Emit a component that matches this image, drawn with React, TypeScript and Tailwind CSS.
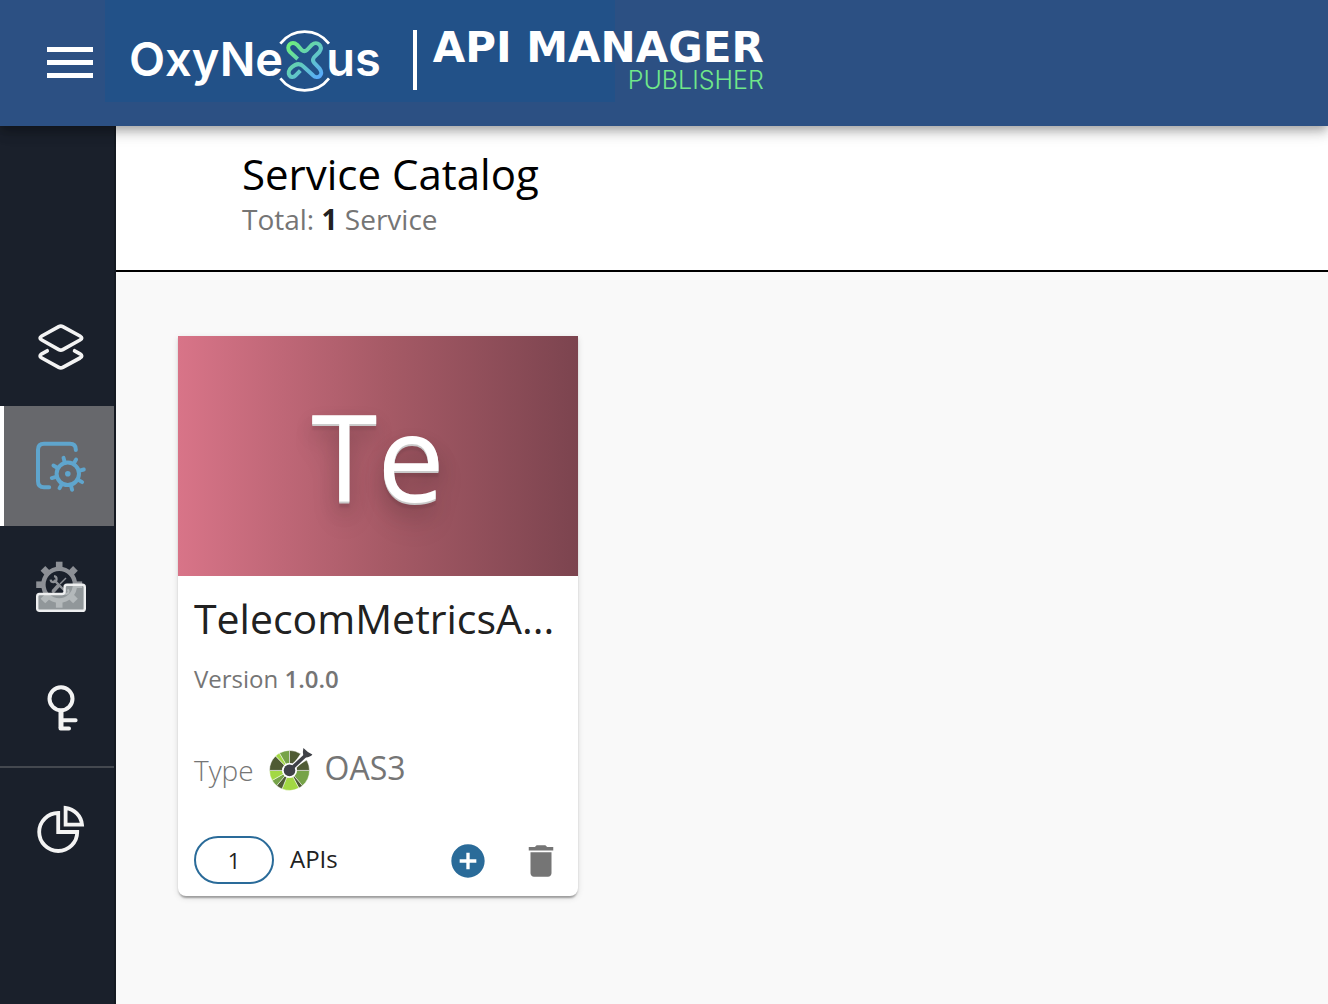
import type { ReactNode } from 'react';
import { MdAddCircle, MdDelete } from 'react-icons/md';

/* ─── Brand mark ─────────────────────────────── */
function NexusMark() {
  return (
    <svg viewBox="825 84 171 186" className="w-[57px] h-[62px] -mx-[7px] flex-shrink-0 overflow-visible" fill="none" aria-hidden="true">
      <defs>
        <linearGradient id="nexus" x1="860" y1="130" x2="960" y2="235" gradientUnits="userSpaceOnUse">
          <stop offset="0" stopColor="#6ff07a" />
          <stop offset="0.5" stopColor="#62cbbd" />
          <stop offset="1" stopColor="#58a8ff" />
        </linearGradient>
      </defs>
      <path d="M838 131A92 92 0 0 1 984 131M838 235A92 92 0 0 0 984 235" stroke="#fff" strokeWidth="8" />
      <path
        d="M890 177L867 156C852 138 872 120 888 134L902 150Q910 157 918 150L933 134C948 121 968 138 955 156L939 172Q933 180 939 188L956 206C970 224 950 240 936 226L908 200Q892 184 872 202C852 218 870 242 884 226L898 212"
        stroke="url(#nexus)"
        strokeWidth="12"
        strokeLinejoin="round"
      />
    </svg>
  );
}

/* ─── Sidebar icons ──────────────────────────── */
function LayersIcon() {
  return (
    <svg viewBox="0 0 50 50" className="w-[50px] h-[50px]" fill="none" stroke="#f3f3f3" strokeWidth="3.7" strokeLinecap="round" strokeLinejoin="round" aria-hidden="true">
      <path d="M22.8 5.6Q24.8 4.5 26.8 5.6L44 15Q47.4 17 44 19L26.8 28.6Q24.8 29.7 22.8 28.6L5.8 19Q2.4 17 5.8 15Z" />
      <path d="M11.2 29.8L5.8 32.8Q2.4 35 5.8 37L22.8 46.3Q24.8 47.4 26.8 46.3L44 37Q47.4 35 44 32.8L38.6 29.8" />
    </svg>
  );
}

const teeth = [-105, -60, -15, 30, 75, 120, 165, 210];

function ServicesIcon() {
  return (
    <svg viewBox="0 0 50 50" className="w-[50px] h-[50px] overflow-visible" fill="none" stroke="#5fa5cd" strokeWidth="4" strokeLinecap="round" aria-hidden="true">
      <path d="M39.8 9V8.5Q39.8 2.8 34 2.8H8Q2 2.8 2 8.8V40.3Q2 46.3 8 46.3H13.2" />
      <circle cx="31.8" cy="32.8" r="11.2" />
      <circle cx="31.8" cy="32.8" r="2.8" fill="#5fa5cd" stroke="none" />
      {teeth.map((deg) => (
        <path key={deg} d="M44 32.8H48.4" strokeWidth="3.9" transform={`rotate(${deg} 31.8 32.8)`} />
      ))}
    </svg>
  );
}

function PoliciesIcon() {
  return (
    <svg viewBox="0 0 50 50" className="w-[50px] h-[50px] overflow-visible" fill="none" aria-hidden="true">
      <g stroke="#8d9096">
        <circle cx="23.2" cy="23.7" r="15.8" strokeWidth="4.4" />
        {[0, 45, 90, 135, 180, 225, 270, 315].map((deg) => (
          <path key={deg} d="M40 23.7H46.2" strokeWidth="6.6" transform={`rotate(${deg} 23.2 23.7)`} />
        ))}
        <path d="M18 19L29 30" strokeWidth="2.4" />
        <path d="M30 17L24 23" strokeWidth="1.4" />
        <path d="M22 25L17.5 30" strokeWidth="3.8" strokeLinecap="round" />
        <path d="M14.6 18.6A3 3 0 1 0 18 15.2" strokeWidth="2.2" />
        <path d="M31.5 28.5A2.4 2.4 0 1 1 28 31.5" strokeWidth="2" />
      </g>
      <path d="M3.5 33H26Q28.6 33 28.6 30.5V26.2Q28.6 23.8 31 23.8H46.4Q48.8 23.8 48.8 26.2V47.4Q48.8 49.8 46.4 49.8H3.5Q1.2 49.8 1.2 47.4V35.4Q1.2 33 3.5 33Z" fill="#c5cbcb" fillOpacity="0.7" stroke="#eeeff0" strokeWidth="2.4" />
    </svg>
  );
}

function KeyIcon() {
  return (
    <svg viewBox="0 0 50 50" className="w-[50px] h-[50px]" fill="none" stroke="#f3f3f3" strokeLinecap="round" aria-hidden="true">
      <circle cx="25" cy="17.7" r="11.5" strokeWidth="4" />
      <path d="M25 30V47" strokeWidth="5" strokeLinecap="butt" />
      <path d="M25 39.3H39.6M24.5 47.4H33" strokeWidth="4" />
    </svg>
  );
}

function PieIcon() {
  return (
    <svg viewBox="0 0 50 50" className="w-[50px] h-[50px]" fill="none" stroke="#f3f3f3" strokeWidth="3.8" aria-hidden="true">
      <path d="M22.2 10A19 19 0 1 0 41.2 29H22.2Z" />
      <path d="M29.6 5V21.6H46A18.6 18.6 0 0 0 29.6 5Z" />
    </svg>
  );
}

/* ─── OpenAPI wheel ──────────────────────────── */
const wedges = [
  { from: 0, to: 50, fill: '#76a348' },
  { from: 50, to: 62, fill: '#4f5b34' },
  { from: 62, to: 112, fill: '#a2d843' },
  { from: 112, to: 130, fill: '#4f5b34' },
  { from: 130, to: 150, fill: '#76a348' },
  { from: 150, to: 180, fill: '#a2d843' },
  { from: 180, to: 226, fill: '#4f5b34' },
  { from: 226, to: 240, fill: '#a2d843' },
  { from: 240, to: 270, fill: '#76a348' },
  { from: 270, to: 304, fill: '#4f5b34' },
  { from: 329, to: 360, fill: '#4f5b34' },
];

function wedgePath(from: number, to: number) {
  const at = (deg: number, r: number) => {
    const a = (deg * Math.PI) / 180;
    return `${20.5 + r * Math.cos(a)} ${22.4 + r * Math.sin(a)}`;
  };
  return `M${at(from, 7)}L${at(from, 20)}A20 20 0 0 1 ${at(to, 20)}L${at(to, 7)}A7 7 0 0 0 ${at(from, 7)}Z`;
}

function OpenApiIcon() {
  return (
    <svg viewBox="0 0 44 44" className="w-11 h-11" aria-hidden="true">
      {wedges.map((w) => (
        <path key={w.from} d={wedgePath(w.from, w.to)} fill={w.fill} stroke="#fff" strokeWidth="0.5" />
      ))}
      <circle cx="20.5" cy="22.4" r="7.4" fill="#fff" />
      <path d="M20.5 22.4L37 7" stroke="#fff" strokeWidth="6" />
      <circle cx="20.5" cy="22.4" r="5.8" fill="#3f4147" />
      <path d="M20.5 22.4L37 7" stroke="#3f4147" strokeWidth="3.6" />
      <path d="M34.4 0Q38 4 43.4 6.4Q41.5 9 36.5 9.4L34.3 7.5Q33.5 3.5 34.4 0Z" fill="#3f4147" />
    </svg>
  );
}

/* ─── Sidebar ────────────────────────────────── */
const navItems: { id: string; label: string; icon: ReactNode; divider?: boolean }[] = [
  { id: 'apis', label: 'APIs', icon: <LayersIcon /> },
  { id: 'services', label: 'Services', icon: <ServicesIcon /> },
  { id: 'policies', label: 'Policies', icon: <PoliciesIcon /> },
  { id: 'keys', label: 'Keys', icon: <KeyIcon /> },
  { id: 'analytics', label: 'Analytics', icon: <PieIcon />, divider: true },
];

function Sidebar() {
  return (
    <nav className="w-[116px] flex-shrink-0 bg-[#1a202b] border-r-2 border-[#151a22] pt-40">
      {navItems.map((item) => (
        <div key={item.id} className={item.divider ? 'border-t-2 border-[#44484f]' : ''}>
          <a
            href={`#${item.id}`}
            aria-label={item.label}
            className={`flex items-center h-[120px] pl-8 border-l-4 ${
              item.id === 'services' ? 'bg-[#67686c] border-l-white' : 'border-l-transparent'
            }`}
          >
            {item.icon}
          </a>
        </div>
      ))}
    </nav>
  );
}

/* ─── Service card ───────────────────────────── */
function ServiceCard() {
  return (
    <article className="w-[400px] bg-white rounded-b-lg shadow-[0_4px_2px_-2px_rgba(0,0,0,0.2),0_2px_2px_rgba(0,0,0,0.14),0_2px_6px_rgba(0,0,0,0.12)]">
      <div className="h-60 flex items-center justify-center bg-[linear-gradient(to_right,#d87488,#a65a66_52%,#7c444f)]">
        <span className="text-[120px] leading-none text-white [text-shadow:0_1px_0_#ccc,0_2px_0_#c9c9c9,0_6px_2px_rgba(0,0,0,0.08),0_10px_20px_rgba(0,0,0,0.18),0_20px_30px_rgba(0,0,0,0.12)]">
          Te
        </span>
      </div>
      <div className="px-4 py-3">
        <h2 className="text-[41px] leading-[60px] text-[#212121] whitespace-nowrap">TelecomMetricsA...</h2>
        <p className="mt-[11px] text-2xl leading-10 text-[#757575]">
          Version <span className="font-semibold">1.0.0</span>
        </p>
        <div className="mt-[47px] flex items-center h-12 text-[#757575]">
          <span className="text-[28px] font-light">Type</span>
          <span className="ml-[15px]">
            <OpenApiIcon />
          </span>
          <span className="ml-3 text-[32px] leading-10 pb-1">OAS3</span>
        </div>
        <div className="mt-[42px] flex items-center h-12">
          <button className="w-20 h-12 rounded-full border-2 border-[#2a6b99] text-[22px] text-[#212121]">1</button>
          <span className="ml-4 text-2xl pb-[2px] text-[#212121]">APIs</span>
          <button aria-label="Create API" className="ml-auto pt-[2px] text-[#2a6b99]">
            <MdAddCircle size={40} />
          </button>
          <button aria-label="Delete service" className="ml-8 pt-[2px] text-[#757575]">
            <MdDelete size={42} />
          </button>
        </div>
      </div>
    </article>
  );
}

export default function App() {
  return (
    <div className="min-h-screen flex flex-col bg-[#f9f9f9] font-['Open_Sans',sans-serif]">
      {/* ── App bar ── */}
      <header className="relative z-10 flex items-start h-[126px] bg-[#2c5083] shadow-[0_4px_8px_-2px_rgba(0,0,0,0.2),0_8px_10px_rgba(0,0,0,0.14),0_2px_20px_rgba(0,0,0,0.12)]">
        <button aria-label="Toggle menu" className="w-[105px] h-[124px] pl-[47px] flex-shrink-0 flex flex-col justify-center gap-2">
          <span className="w-[46px] h-[5px] bg-white" />
          <span className="w-[46px] h-[5px] bg-white" />
          <span className="w-[46px] h-[5px] bg-white" />
        </button>
        <a
          href="#home"
          className="flex items-start h-[102px] pl-6 pt-7 text-white font-['Inter',sans-serif] font-semibold whitespace-nowrap bg-[linear-gradient(#225188,#225188)] bg-[length:510px_102px] bg-no-repeat"
        >
          <span className="flex items-center text-[47px] leading-[60px]">
            <span>OxyNe</span>
            <NexusMark />
            <span>us</span>
          </span>
          <span className="ml-8 mt-[2px] w-1 h-[60px] bg-white" />
          <span className="ml-4 pt-[2px] flex flex-col items-end">
            <span className="text-[42px] leading-9 font-bold font-['DejaVu_Sans',sans-serif]">API MANAGER</span>
            <span className="text-[25px] leading-7 font-light text-[#70e88a]">PUBLISHER</span>
          </span>
        </a>
      </header>

      <div className="flex flex-1">
        <Sidebar />
        <main className="flex-1 min-w-0">
          <div className="h-[146px] bg-white border-b-2 border-black pl-[126px] pt-[23px]">
            <h1 className="text-[42px] leading-[50px] text-black">Service Catalog</h1>
            <p className="text-[28px] leading-10 text-[#757575]">
              Total: <span className="font-bold text-[#212121]">1</span> Service
            </p>
          </div>
          <div className="pl-[62px] py-16">
            <ServiceCard />
          </div>
        </main>
      </div>
    </div>
  );
}
